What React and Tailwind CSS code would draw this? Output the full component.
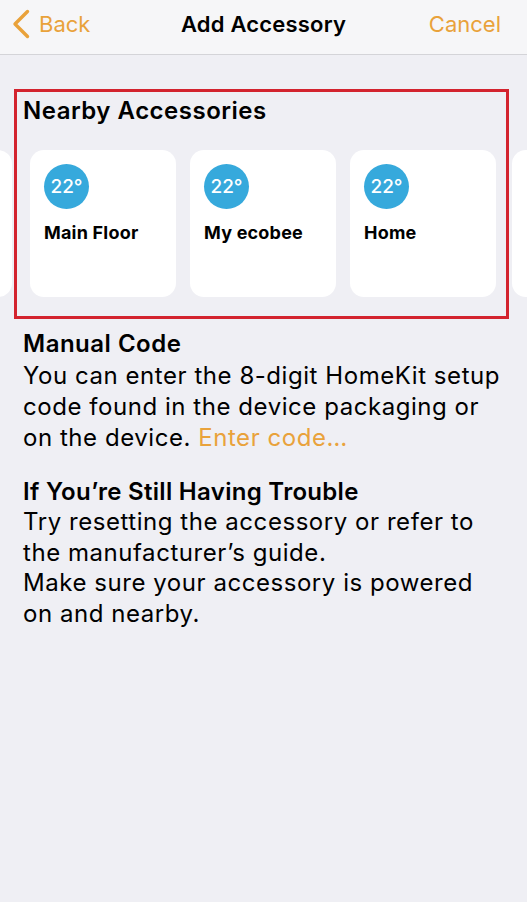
import React from "react";

function Card({ name }) {
  return (
    <div className="w-[146px] h-[147px] shrink-0 rounded-[14px] bg-white pl-[14px] pt-[14px]">
      {name ? (
        <>
          <div className="w-[45px] h-[45px] rounded-full bg-[#36a9dc] flex items-center justify-center text-white text-[19px] font-medium leading-none">
            22°
          </div>
          <div className="mt-[13px] text-[18px] font-bold text-black leading-[22px] tracking-[0.2px]">{name}</div>
        </>
      ) : null}
    </div>
  );
}

export default function App() {
  return (
    <div
      className="w-[527px] h-[902px] bg-[#efeff4] overflow-hidden relative"
      style={{ fontFamily: "Inter, 'Noto Sans', sans-serif" }}
    >
      <div className="h-[55px] bg-[#f6f6f8] border-b border-[#d4d4d8] flex items-center justify-between pl-[12px] pr-[26px] pb-[6px] relative">
        <div className="flex items-center gap-[9px] text-[#e9a23b]">
          <svg width="18" height="30" viewBox="0 0 18 30" fill="none">
            <path d="M15.5 2.5 L3 15 L15.5 27.5" stroke="#e9a23b" strokeWidth="3.4" strokeLinecap="round" strokeLinejoin="round" />
          </svg>
          <span className="text-[22px] leading-none">Back</span>
        </div>
        <div className="absolute left-0 right-0 text-center text-[22px] leading-none font-semibold tracking-[0.2px] text-black pointer-events-none">
          Add Accessory
        </div>
        <span className="text-[22px] leading-none text-[#e9a23b]">Cancel</span>
      </div>

      <div className="pt-[41px]">
        <h2 className="px-[23px] text-[24px] font-semibold text-black leading-[29px] tracking-[0.5px]">Nearby Accessories</h2>
        <div className="mt-[25px] flex gap-[14px] ml-[-134px]">
          <div className="mr-[4px]">
            <Card name="" />
          </div>
          <Card name="Main Floor" />
          <Card name="My ecobee" />
          <Card name="Home" />
          <div className="ml-[2px]">
            <Card name="" />
          </div>
        </div>
      </div>

      <div className="absolute left-[14px] top-[89px] w-[495px] h-[230px] border-[3px] border-[#d3232e] pointer-events-none" />

      <div className="px-[23px] mt-[31px] text-black whitespace-nowrap">
        <h3 className="text-[24px] font-semibold leading-[32px] tracking-[0.5px]">Manual Code</h3>
        <p className="text-[24px] leading-[31px] tracking-[0.55px]">
          You can enter the 8-digit HomeKit setup
          <br />
          code found in the device packaging or
          <br />
          on the device. <span className="text-[#e9a23b]">Enter code…</span>
        </p>
        <h3 className="mt-[23px] text-[24px] font-semibold leading-[31px] tracking-[0.3px]">If You’re Still Having Trouble</h3>
        <p className="text-[24px] leading-[30.5px] tracking-[0.55px]">
          Try resetting the accessory or refer to
          <br />
          the manufacturer’s guide.
          <br />
          Make sure your accessory is powered
          <br />
          on and nearby.
        </p>
      </div>
    </div>
  );
}
